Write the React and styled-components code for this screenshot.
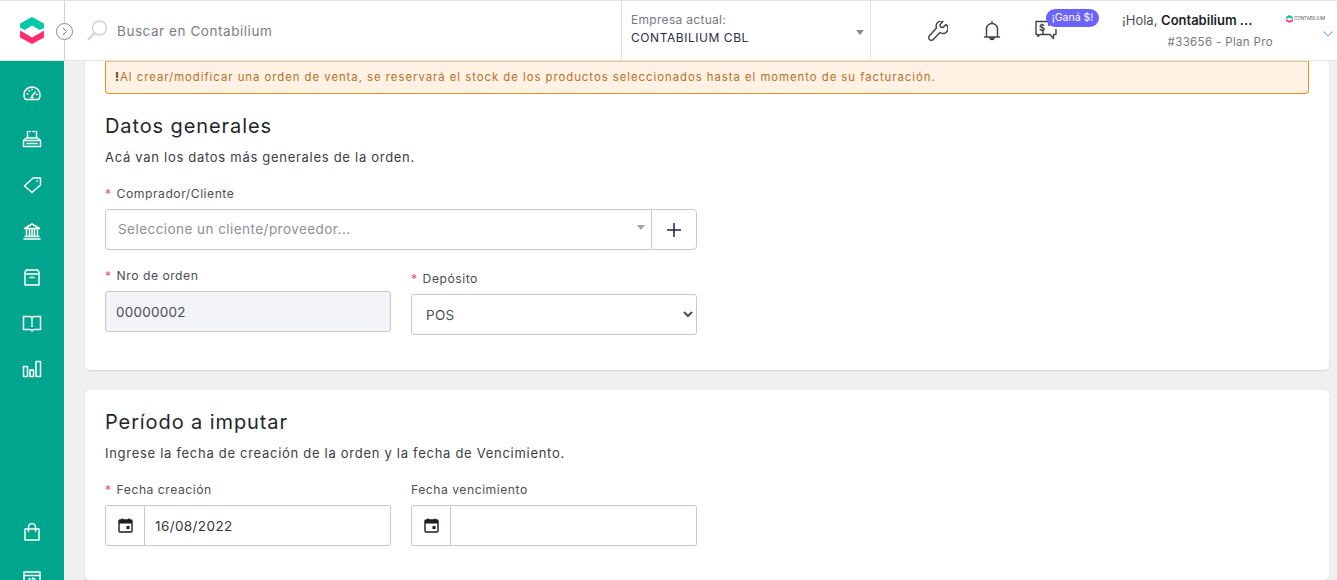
import React from "react";
import styled, { createGlobalStyle } from "styled-components";

const Global = createGlobalStyle`
  html, body { margin: 0; padding: 0; height: 100%; overflow: hidden; background: #f0f0f0; }
  body { font-family: Inter, "Noto Sans", sans-serif; color: #212529; }
  #root { height: 580px; }
  * { box-sizing: border-box; }
`;

const Page = styled.div`height: 580px; display: flex; flex-direction: column; overflow: hidden;`;
const TopBar = styled.header`
  height: 61px; flex: none; display: flex; background: #fff;
  border-top: 1px solid #e2e2e2; border-bottom: 1px solid #e2e2e2;
`;
const LogoCell = styled.div`
  width: 65px; flex: none; position: relative; display: flex; align-items: center;
  padding-left: 20px; border-right: 1px solid #d0d0d0;
`;
const Collapse = styled.span`
  position: absolute; right: -9px; top: 22px; width: 17px; height: 17px; border-radius: 50%;
  background: #fff; border: 1px solid #8a8a8a; display: flex; align-items: center; justify-content: center;
`;
const SearchCell = styled.div`
  width: 556px; flex: none; display: flex; align-items: center; gap: 9px; padding-left: 22px;
`;
const SearchText = styled.span`font-size: 13.5px; letter-spacing: .55px; color: #7b8087;`;
const Company = styled.div`
  width: 250px; flex: none; height: 59px; position: relative; padding: 11px 0 0 9px;
  border-left: 1px solid #e2e2e2; border-right: 1px solid #e2e2e2;
`;
const CompanyLabel = styled.div`font-size: 12px; letter-spacing: .3px; color: #74787d; line-height: 15px;`;
const CompanyName = styled.div`font-size: 12px; letter-spacing: .55px; color: #2a2d48; line-height: 15px; margin-top: 3px;`;
const Caret = styled.span`
  position: absolute; right: 6px; top: 29px; width: 0; height: 0;
  border-left: 4px solid transparent; border-right: 4px solid transparent; border-top: 5px solid ${p => p.$c || "#8a8a8a"};
`;
const Tools = styled.div`width: 252px; flex: none; display: flex; align-items: center; padding-left: 57px; gap: 0;`;
const ToolSlot = styled.span`
  width: 53px; display: flex; position: relative; flex: none; color: #3f4246;
  padding-left: ${p => p.$pl || 0}px;
`;
const Badge = styled.span`
  position: absolute; left: 12px; top: -11px; width: 53px; height: 18px; border-radius: 9px;
  background: #6c63ff; color: #fff; font-size: 10.5px; line-height: 18px; text-align: center; white-space: nowrap;
`;
const User = styled.div`flex: none; width: 151px; text-align: right; margin-left: -1px; padding-top: 11px; height: 59px;`;
const Hello = styled.div`font-size: 13px; line-height: 17px; color: #4b4f54; letter-spacing: 0; white-space: nowrap; text-align: left;`;
const HelloName = styled.b`font-weight: 600; color: #1c1f24; letter-spacing: 0;`;
const Plan = styled.div`font-size: 11.5px; line-height: 15px; margin-top: 6px; color: #74787d; letter-spacing: .35px;`;
const Brand = styled.div`flex: none; width: 60px; padding: 14px 0 0 13px; position: relative;`;
const BrandRow = styled.div`display: flex; align-items: center; gap: 1px; font-size: 4.5px; color: #555; line-height: 7px; white-space: nowrap;`;
const BrandChevron = styled.span`position: absolute; left: 50px; top: 30px; display: flex;`;

const Body = styled.div`flex: 1; min-height: 0; display: flex;`;
const Side = styled.nav`width: 64px; flex: none; background: #00a58e; display: flex; flex-direction: column; align-items: center; overflow: hidden; padding-top: 22px;`;
const SideIcon = styled.span`
  width: 20px; height: 20px; flex: none; display: flex; color: #fff; margin-bottom: 26px;
  ${p => p.$push && "margin-top: 117px; margin-bottom: 27px;"}
`;
const Main = styled.main`flex: 1; min-width: 0; padding: 0 8px 0 21px; display: flex; flex-direction: column; gap: 20px; overflow: hidden;`;
const Card = styled.section`
  background: #fff; flex: none; padding: 0 20px; height: ${p => p.$h}px;
  border-radius: ${p => p.$top ? "0 0 5px 5px" : "5px"};
  box-shadow: 0 1px 2px rgba(0,0,0,.12);
`;
const Alert = styled.div`
  height: 33px; background: #fff1e4; border: 1px solid #ee8f1f; border-top-color: #f4c48c; border-radius: 0 0 4px 4px;
  padding: 0 0 0 9px; font-size: 11.3px; line-height: 31px; letter-spacing: .99px; color: #b8702a; white-space: nowrap;
`;
const Bang = styled.b`color: #7a4a1c; font-weight: 800;`;
const Title = styled.h2`font-size: 20px; font-weight: 400; margin: ${p => p.$mt}px 0 0; line-height: 26px; color: #23272b; letter-spacing: .9px;`;
const Sub = styled.p`font-size: 13px; margin: 9px 0 0; line-height: 18px; color: #3c4044; letter-spacing: .71px;`;
const Label = styled.label`display: block; font-size: 12.2px; line-height: 16px; color: #4b4f54; letter-spacing: .5px;`;
const Req = styled.span`color: #f0437c; margin-right: 5px;`;
const Wide = styled.div`width: 592px; margin-top: ${p => p.$mt}px;`;
const Combo = styled.div`display: flex; height: 41px; margin-top: 7px;`;
const ComboField = styled.div`
  flex: 1; position: relative; border: 1px solid #c9c9c9; border-right: none; border-radius: 4px 0 0 4px;
  padding-left: 12px; font-size: 13.5px; line-height: 38px; letter-spacing: .45px; color: #8d9094;
`;
const ComboCaret = styled(Caret)`top: 15px; right: 6px; border-top-color: #a5a5a5;`;
const Plus = styled.div`width: 46px; border: 1px solid #c9c9c9; border-radius: 0 4px 4px 0; display: flex; align-items: center; justify-content: center;`;
const Row = styled.div`display: flex; gap: 20px; width: 592px; margin-top: ${p => p.$mt}px; align-items: flex-start;`;
const Col = styled.div`width: 286px; flex: none; padding-top: ${p => p.$pt || 0}px;`;
const ReadOnly = styled.div`
  height: 41px; margin-top: 7px; background: #f3f4f8; border: 1px solid #c9c9c9; border-radius: 3px;
  padding-left: 10px; font-size: 13.5px; line-height: 41px; letter-spacing: .25px; color: #4b4f54;
`;
const Select = styled.select`
  width: 100%; height: 41px; margin-top: 7px; background: #fff; border: 1px solid #c9c9c9; border-radius: 3px;
  padding-left: 10px; font: 13.5px Inter, sans-serif; letter-spacing: .3px; color: #4b4f54;
`;
const DateBox = styled.div`display: flex; height: 41px; margin-top: 7px; border: 1px solid #c9c9c9; border-radius: 2px;`;
const DateIcon = styled.span`width: 39px; flex: none; border-right: 1px solid #c9c9c9; display: flex; align-items: center; justify-content: center;`;
const DateValue = styled.span`padding-left: 10px; font-size: 13.5px; line-height: 41px; letter-spacing: .4px; color: #33363a;`;

const Svg = ({ size = 20, children, sw = 1.5, vb = 20 }) => (
  <svg width={size} height={size} viewBox={`0 0 ${vb} ${vb}`} fill="none" stroke="currentColor" strokeWidth={sw} strokeLinecap="round" strokeLinejoin="round">{children}</svg>
);

const Logo = ({ s = 24 }) => (
  <svg width={s} height={s * 1.12} viewBox="0 0 24 27">
    <path d="M12 0 L24 6.500 V11 L20 13 L12 8.500 L4.500 13 L0 10.500 V6.500 Z" fill="#00c9a7" />
    <path d="M0 13.500 L4.500 16 L12 20.500 L20 16 L24 13.500 V20.500 L12 27 L0 20.500 Z" fill="#ff2d6b" />
  </svg>
);

const icons = [
  <Svg><path d="M3.500 16.500h13c1.200-1.600 1.800-3.500 1.500-5.500C17.400 6.800 14 4 10 4S2.600 6.800 2 11c-.3 2 .3 3.900 1.500 5.500Z" /><path d="M10 13l3.500-4M8.800 14.500h2.400M5 11h.8M14.500 11.500h.8M7 7.500l.5.6M10 6v.8" /></Svg>,
  <Svg><path d="M5.500 9V2.500M14.500 9V2.500M7.500 2.500h1M11 2.500h1.500M1.500 17.500V11.500L4.500 9h11l3 2.500v6ZM5 14.500h10M3 11.500h14" /></Svg>,
  <Svg><path d="M18.500 3v7L10 17.500 2.500 11 11 3ZM15 6h.5" /></Svg>,
  <Svg><path d="M2.500 7.500 10 3l7.500 4.500ZM4.500 8.500v7M7.500 8.500v7M10 8.500v7M12.500 8.500v7M15.500 8.500v7M3 15.500h14M2 18h16" /></Svg>,
  <Svg><path d="M4.500 3h11L17 5v13H3V5ZM3 7h14M8 10.500h4" /></Svg>,
  <Svg><path d="M1.500 3.500h7L10 5l1.500-1.500h7v13h-7L10 18l-1.500-1.500h-7ZM10 6v1.500M10 9v1.500M10 12v1.500" /></Svg>,
  <Svg><path d="M1.500 7.500h4v10h-4ZM8 11h3.500v6.500H8ZM14 2.500h4.500v15H14Z" /></Svg>,
  <Svg><path d="M3 7h14v11H3ZM6.500 9.500V5a3.500 3.500 0 0 1 7 0v4.500" /></Svg>,
  <Svg><path d="M2 3h16v15H2ZM2 6.500h16M8 9.500l-2 2.500 2 2.500M12 9.500l2 2.500-2 2.500M10.800 9l-1.600 6" /></Svg>,
];

const Cal = () => (
  <svg width="15" height="15" viewBox="0 0 15 15">
    <rect x="1" y="2" width="13" height="12" rx="1" fill="none" stroke="#1b1d24" strokeWidth="1.400" />
    <rect x="1" y="2" width="13" height="3.500" fill="#1b1d24" />
    <rect x="3.500" y="0.500" width="1.500" height="2" fill="#1b1d24" />
    <rect x="10" y="0.500" width="1.500" height="2" fill="#1b1d24" />
    <rect x="8.500" y="8" width="3" height="3" fill="#1b1d24" />
  </svg>
);

export default function App() {
  return (
    <Page>
      <Global />
      <TopBar>
        <LogoCell>
          <Logo />
          <Collapse>
            <svg width="9" height="9" viewBox="0 0 9 9" fill="none" stroke="#7a7a7a" strokeWidth="1"><path d="M3 1l3.500 3.500L3 8" /></svg>
          </Collapse>
        </LogoCell>
        <SearchCell>
          <svg width="21" height="21" viewBox="0 0 21 21" fill="none" stroke="#d2d2d2"><circle cx="12.500" cy="8" r="7" strokeWidth="1.500" /><path d="M7.500 13 1.500 19.500" strokeWidth="2" strokeLinecap="round" /></svg>
          <SearchText>Buscar en Contabilium</SearchText>
        </SearchCell>
        <Company>
          <CompanyLabel>Empresa actual:</CompanyLabel>
          <CompanyName>CONTABILIUM CBL</CompanyName>
          <Caret />
        </Company>
        <Tools>
          <ToolSlot>
            <svg width="20" height="20" viewBox="0 0 20 20" fill="none" stroke="currentColor" strokeWidth="1.400" strokeLinejoin="round"><path d="M18 3.500l-3 3-2.500-.5-.5-2.500 3-3a5 5 0 0 0-6.500 6.500L1.500 14.800a2.500 2.500 0 0 0 3.700 3.700L12 11.500a5 5 0 0 0 6-8Z" /></svg>
          </ToolSlot>
          <ToolSlot $pl={2}>
            <svg width="18" height="20" viewBox="0 0 18 20" fill="none" stroke="currentColor" strokeWidth="1.400" strokeLinejoin="round" strokeLinecap="round"><path d="M3.500 15.500V8a5.500 5.500 0 0 1 11 0v7.500M1.500 16h15M9 .8v1.500" /><path d="M7 16.500a2 2 0 0 0 4 0" fill="currentColor" /></svg>
          </ToolSlot>
          <ToolSlot $pl={1}>
            <svg width="22" height="21" viewBox="0 0 22 21" fill="none" stroke="currentColor" strokeWidth="1.400" strokeLinejoin="round"><path d="M9 14.500H5l-2 2v-2H1V1.500h13V6M8 10v4.500h7l3.500 4v-4H21V9" /><text x="4" y="11" fontSize="9" fontWeight="700" fill="currentColor" stroke="none" fontFamily="Inter">$</text></svg>
            <Badge>¡Ganá $!</Badge>
          </ToolSlot>
        </Tools>
        <User>
          <Hello>¡Hola, <HelloName>Contabilium ...</HelloName></Hello>
          <Plan>#33656 - Plan Pro</Plan>
        </User>
        <Brand>
          <BrandRow><Logo s={7} /><span>CONTABILIUM</span></BrandRow>
          <BrandChevron>
            <svg width="10" height="6" viewBox="0 0 10 6" fill="none" stroke="#6d8fc0" strokeWidth="1"><path d="M.5.500 5 5 9.500.500" /></svg>
          </BrandChevron>
        </Brand>
      </TopBar>
      <Body>
        <Side>
          {icons.map((ic, i) => <SideIcon key={i} $push={i === 7}>{ic}</SideIcon>)}
        </Side>
        <Main>
          <Card $top $h={309}>
            <Alert><Bang>!</Bang>Al crear/modificar una orden de venta, se reservará el stock de los productos seleccionados hasta el momento de su facturación.</Alert>
            <Title $mt={19}>Datos generales</Title>
            <Sub>Acá van los datos más generales de la orden.</Sub>
            <Wide $mt={20}>
              <Label><Req>*</Req>Comprador/Cliente</Label>
              <Combo>
                <ComboField>Seleccione un cliente/proveedor...<ComboCaret /></ComboField>
                <Plus>
                  <svg width="14" height="14" viewBox="0 0 14 14" stroke="#1c2340" strokeWidth="1.500"><path d="M7 0v14M0 7h14" /></svg>
                </Plus>
              </Combo>
            </Wide>
            <Row $mt={18}>
              <Col>
                <Label><Req>*</Req>Nro de orden</Label>
                <ReadOnly>00000002</ReadOnly>
              </Col>
              <Col $pt={3}>
                <Label><Req>*</Req>Depósito</Label>
                <Select defaultValue="POS"><option>POS</option></Select>
              </Col>
            </Row>
          </Card>
          <Card $h={190}>
            <Title $mt={19}>Período a imputar</Title>
            <Sub>Ingrese la fecha de creación de la orden y la fecha de Vencimiento.</Sub>
            <Row $mt={20}>
              <Col>
                <Label><Req>*</Req>Fecha creación</Label>
                <DateBox><DateIcon><Cal /></DateIcon><DateValue>16/08/2022</DateValue></DateBox>
              </Col>
              <Col>
                <Label>Fecha vencimiento</Label>
                <DateBox><DateIcon><Cal /></DateIcon><DateValue /></DateBox>
              </Col>
            </Row>
          </Card>
        </Main>
      </Body>
    </Page>
  );
}
